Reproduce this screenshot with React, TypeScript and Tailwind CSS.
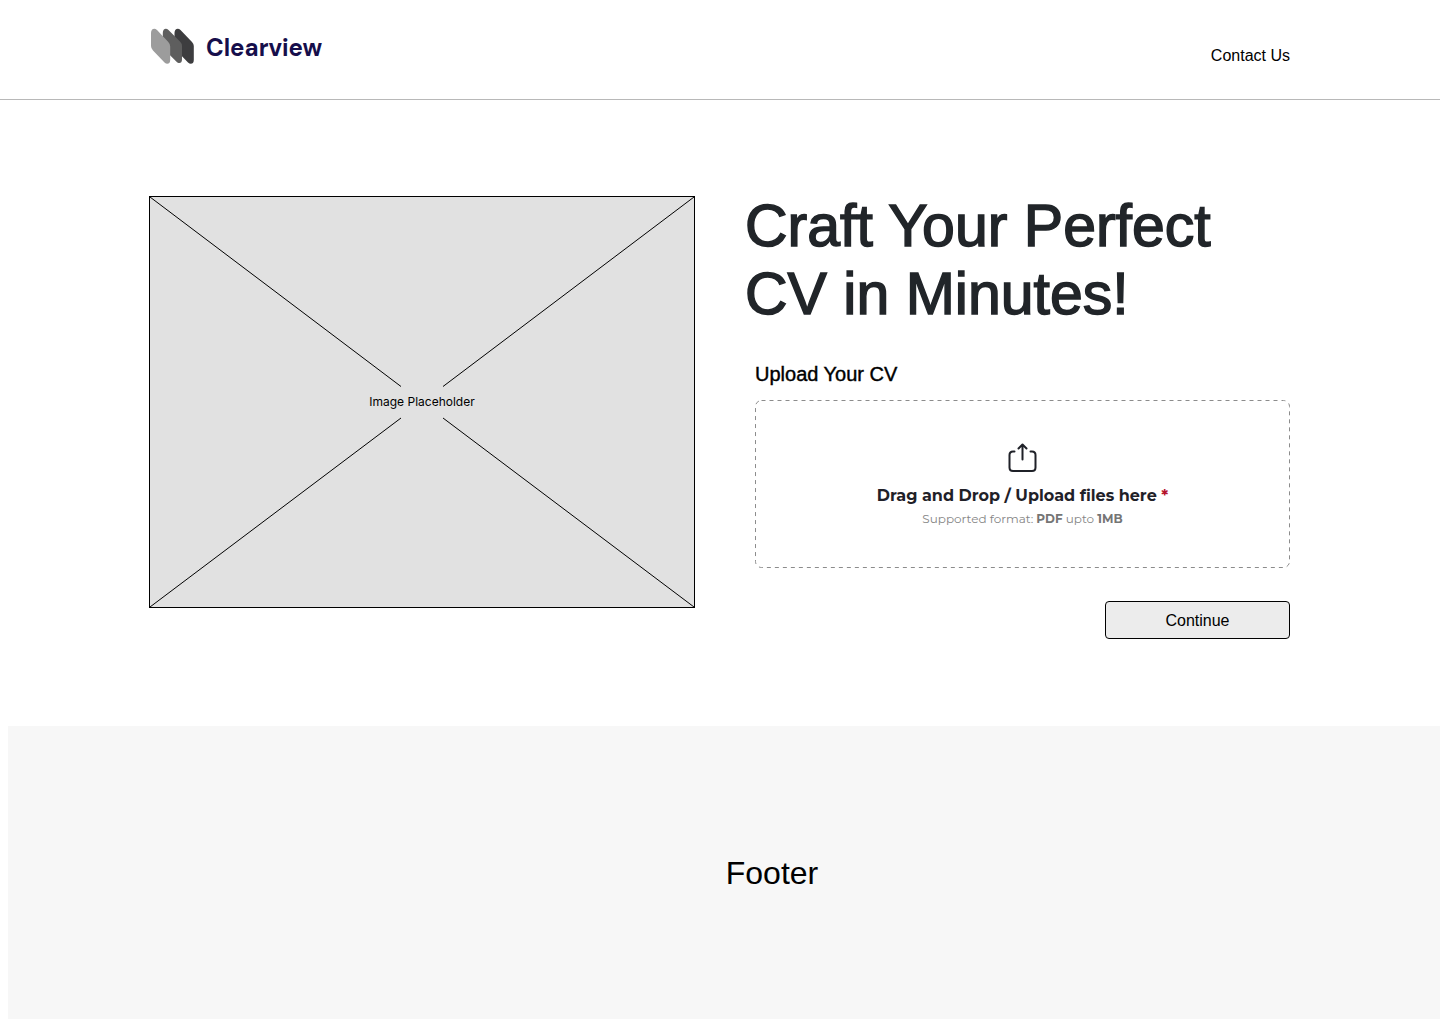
function Logo() {
  return (
    <a href="#" className="flex items-start gap-3">
      <svg className="h-9 w-11" viewBox="0 0 44 36" aria-hidden="true">
        <path d="M24.500 5C24.500 .8 28-.4 30.500 2L42 14Q43.800 15.800 43.800 18V32C43.800 36 40.500 37 38 34.500L26.500 22.500Q24.500 20.500 24.500 18Z" fill="#3d3d3f" />
        <path d="M12.800 5C12.800 .8 16-.4 18.500 2L30 13.500Q32 15.500 32 18V31.500C32 35.500 28.800 36 26.300 33.500L14.800 22Q12.800 20 12.800 17.500Z" fill="#5e5e5e" />
        <path d="M1 5C1 .8 4.500-.4 7 2L18.300 14Q20.200 16 20.200 18.500V32C20.200 36 17 37 14.500 34.500L3 22.500Q1 20.500 1 18Z" fill="#9c9c9c" />
      </svg>
      <span className="pt-1 font-['DM_Sans','Inter',sans-serif] text-2xl leading-8 font-bold text-[#160e4b]">Clearview</span>
    </a>
  );
}

function Header() {
  return (
    <header className="border-b border-[#b8b8b8]">
      <div className="mx-auto flex max-w-[1140px] items-start justify-between pt-7 pb-[31px]">
        <Logo />
        <nav className="pt-4">
          <a href="#contact" className="block text-base leading-6">Contact Us</a>
        </nav>
      </div>
    </header>
  );
}

function ImagePlaceholder() {
  return (
    <div className="relative grid aspect-[546/412] place-items-center self-start border border-black bg-[#e1e1e1]">
      <svg className="absolute inset-0 h-full w-full" viewBox="0 0 544 410" preserveAspectRatio="none" fill="none" stroke="#000" aria-hidden="true">
        <path d="M0 0 251 189.500M544 0 293 189.500M0 410 251 221M544 410 293 221" />
      </svg>
      <span className="relative font-['Inter',sans-serif] text-xs leading-4">Image Placeholder</span>
    </div>
  );
}

function UploadIcon() {
  return (
    <svg className="h-8 w-8" viewBox="0 0 32 32" fill="none" stroke="#1f2128" strokeWidth="2" strokeLinecap="round" strokeLinejoin="round" aria-hidden="true">
      <path d="M15.500 17.500V3M11.500 6.500 15.500 2.500 19.500 6.500M7.500 9.500H6Q2.500 9.500 2.500 13V25.500Q2.500 29 6 29H25Q28.500 29 28.500 25.500V13Q28.500 9.500 25 9.500H23.500" />
    </svg>
  );
}

function UploadForm() {
  return (
    <form className="flex flex-col pt-8 pr-px pl-2.5" onSubmit={(e) => e.preventDefault()}>
      <h2 className="text-xl leading-7 [-webkit-text-stroke:0.4px]">Upload Your CV</h2>
      <label className="relative mt-3 flex h-[168px] cursor-pointer flex-col items-center pt-[42px] font-['Montserrat','Inter',sans-serif]">
        <svg className="absolute inset-0 h-full w-full overflow-visible p-[0.5px]" aria-hidden="true">
          <rect width="100%" height="100%" rx="6" fill="none" stroke="#8c8c8c" strokeDasharray="4 4" />
        </svg>
        <UploadIcon />
        <span className="mt-2.5 text-base leading-6 font-bold text-[#1f2128]">
          Drag and Drop / Upload files here <span className="text-[#b5122b]">*</span>
        </span>
        <span className="mt-[3px] text-xs leading-4 text-[#858585]">
          Supported format: <b className="text-[#757575]">PDF</b> upto <b className="text-[#757575]">1MB</b>
        </span>
        <input type="file" accept="application/pdf" required className="sr-only" />
      </label>
      <button type="submit" className="mt-[33px] h-[38px] w-[185px] self-end rounded border border-black bg-[#ececec] pt-0.5 text-base leading-6">
        Continue
      </button>
    </form>
  );
}

export default function App() {
  return (
    <div className="min-h-screen bg-white font-['Liberation_Sans',Arial,sans-serif] text-black">
      <Header />
      <main className="mx-auto grid max-w-[1142px] grid-cols-2 gap-x-[50px] pt-24 pb-[87px]">
        <ImagePlaceholder />
        <section className="-mt-1">
          <h1 className="text-[59px] leading-[68px] text-[#212529] [-webkit-text-stroke:1.5px]">
            Craft Your Perfect
            <br />
            CV in Minutes!
          </h1>
          <UploadForm />
        </section>
      </main>
      <footer className="ml-2 flex h-[293px] items-center justify-center bg-[#f7f7f7] pl-24">
        <p className="text-[32px] leading-10">Footer</p>
      </footer>
    </div>
  );
}
